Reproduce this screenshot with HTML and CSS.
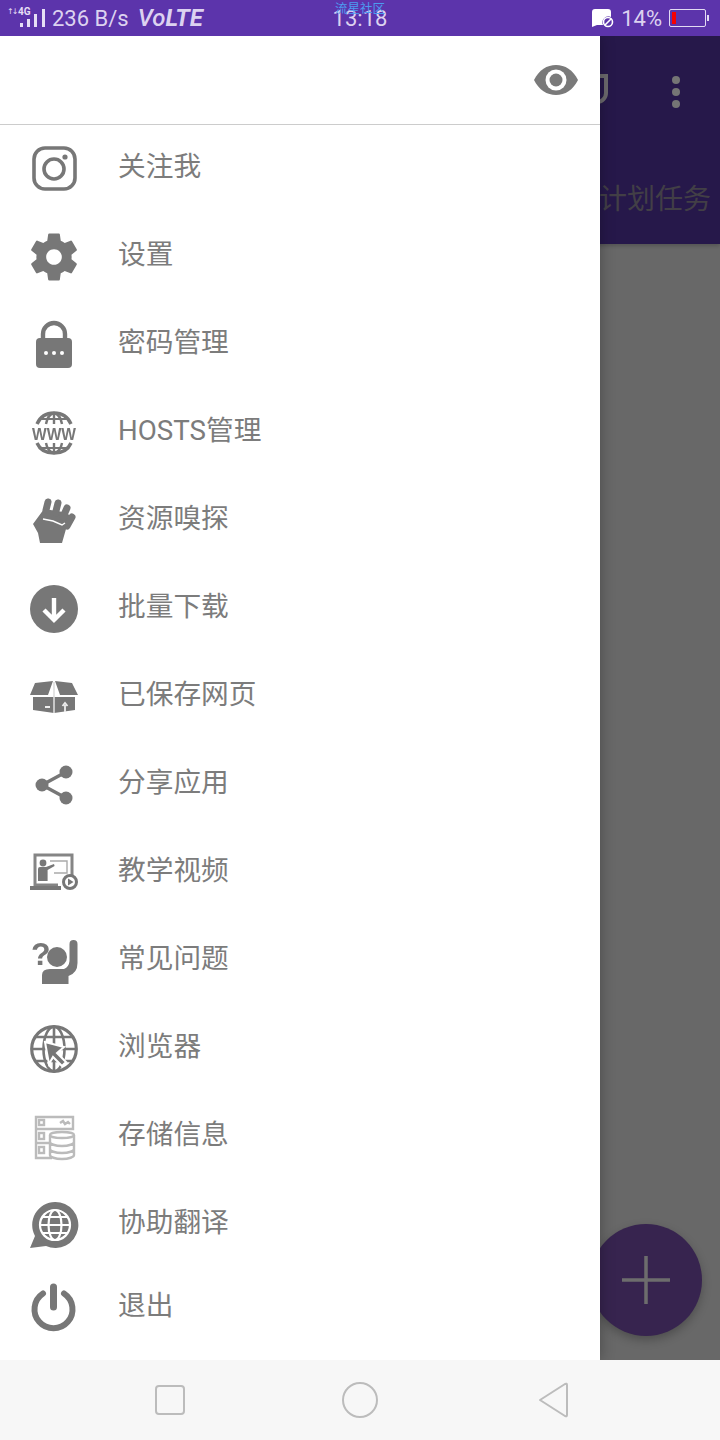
FILE: index.html
```html
<!DOCTYPE html>
<html lang="zh">
  <head>
    <meta charset="UTF-8" />
    <title>Navigation drawer</title>
    <link rel="stylesheet" href="styles.css">
  </head>
  <body>
    <div class="phone">
      <div class="status-bar">
        <div class="status-left">
          <svg class="signal" width="40" height="22" viewBox="0 0 40 22">
            <text class="signal-arrows" x="0" y="9">↑↓</text>
            <text class="signal-tag" x="11" y="10">4G</text>
            <rect x="13" y="18" width="3" height="4" />
            <rect x="20" y="14" width="3" height="8" />
            <rect x="27" y="9" width="3" height="13" />
            <rect x="35" y="4" width="3" height="18" />
          </svg>
          <span class="speed">236 B/s</span>
          <span class="volte">Vo<b>LTE</b></span>
        </div>
        <div class="status-center">
          <span class="watermark">流星社区</span>
          <span class="clock">13:18</span>
        </div>
        <div class="status-right">
          <svg class="msg-icon" width="22" height="20" viewBox="0 0 22 20">
            <path d="M3 1h13a3 3 0 0 1 3 3v5a6 6 0 0 0-8 8H5l-5 2V4a3 3 0 0 1 3-3z" fill="#fff" />
            <circle cx="16" cy="14" r="4.5" fill="none" stroke="#fff" stroke-width="1.6" />
            <path d="M13 17l6-6" stroke="#fff" stroke-width="1.6" />
          </svg>
          <span class="percent">14%</span>
          <div class="battery"><div class="battery-level"></div></div>
          <div class="battery-nub"></div>
        </div>
      </div>

      <div class="main">
        <div class="behind">
          <div class="toolbar">
            <div class="toolbar-icons">
              <svg width="30" height="30" viewBox="0 0 30 30">
                <path d="M0 2h28v17a9 9 0 0 1-9 9H9" fill="none" stroke="#6c6a6e" stroke-width="4" />
                <path d="M0 12h22v8a3 3 0 0 1-3 3H0z" fill="#6c6a6e" />
              </svg>
              <div class="dots"><i></i><i></i><i></i></div>
            </div>
            <div class="toolbar-tab">计划任务</div>
          </div>
        </div>

        <div class="fab">
          <svg width="48" height="48" viewBox="0 0 48 48">
            <path d="M24 0v48M0 24h48" stroke="#6d6d6d" stroke-width="3.5" />
          </svg>
        </div>

        <div class="drawer">
          <div class="drawer-head">
            <svg width="46" height="32" viewBox="0 0 46 32">
              <path d="M1 16C6 6 14 1 23 1s17 5 22 15c-5 10-13 15-22 15S6 26 1 16z" fill="#7a7a7a" />
              <circle cx="23" cy="16" r="10.5" fill="#fff" />
              <circle cx="23" cy="16" r="6.5" fill="#7a7a7a" />
            </svg>
          </div>
          <ul class="menu">
            <li class="menu-item">
              <svg class="menu-icon" viewBox="0 0 48 48">
                <rect x="4" y="3" width="41" height="41" rx="11" fill="none" stroke="#777" stroke-width="3.6" />
                <circle cx="24" cy="24" r="10" fill="none" stroke="#777" stroke-width="3.6" />
                <circle cx="35" cy="12" r="2.6" fill="#777" />
              </svg>
              <span class="menu-label">关注我</span>
            </li>
            <li class="menu-item">
              <svg class="menu-icon" viewBox="2.2 2.2 19.6 19.6">
                <path fill="#777" d="M19.14,12.94c0.04-0.3,0.06-0.61,0.06-0.94c0-0.32-0.02-0.64-0.07-0.94l2.03-1.58c0.18-0.14,0.23-0.41,0.12-0.61l-1.92-3.32c-0.12-0.22-0.37-0.29-0.59-0.22l-2.39,0.96c-0.5-0.38-1.03-0.7-1.62-0.94L14.4,2.81c-0.04-0.24-0.24-0.41-0.48-0.41h-3.84c-0.24,0-0.43,0.17-0.47,0.41L9.25,5.35C8.66,5.59,8.12,5.92,7.63,6.29L5.24,5.33c-0.22-0.08-0.47,0-0.59,0.22L2.74,8.87C2.62,9.08,2.66,9.34,2.86,9.48l2.03,1.58C4.84,11.36,4.8,11.69,4.8,12s0.02,0.64,0.07,0.94l-2.03,1.58c-0.18,0.14-0.23,0.41-0.12,0.61l1.92,3.32c0.12,0.22,0.37,0.29,0.59,0.22l2.39-0.96c0.5,0.38,1.03,0.7,1.62,0.94l0.36,2.54c0.05,0.24,0.24,0.41,0.48,0.41h3.84c0.24,0,0.44-0.17,0.47-0.41l0.36-2.54c0.59-0.24,1.13-0.56,1.62-0.94l2.39,0.96c0.22,0.08,0.47,0,0.59-0.22l1.92-3.32c0.12-0.22,0.07-0.47-0.12-0.61L19.14,12.94z M12,15.2c-1.77,0-3.2-1.43-3.2-3.2s1.43-3.2,3.2-3.2s3.2,1.43,3.2,3.2S13.77,15.2,12,15.2z" />
              </svg>
              <span class="menu-label">设置</span>
            </li>
            <li class="menu-item">
              <svg class="menu-icon" viewBox="0 0 48 48">
                <path d="M13 20v-7a11 11 0 0 1 22 0v7" fill="none" stroke="#777" stroke-width="4.4" />
                <rect x="6" y="17" width="36" height="30" rx="4" fill="#777" />
                <circle cx="16" cy="32" r="2" fill="#fff" />
                <circle cx="24" cy="32" r="2" fill="#fff" />
                <circle cx="32" cy="32" r="2" fill="#fff" />
              </svg>
              <span class="menu-label">密码管理</span>
            </li>
            <li class="menu-item">
              <svg class="menu-icon" viewBox="0 0 48 48">
                <path d="M7 15C10 8 16 4 24 4s14 4 17 11M7 34c3 7 9 10 17 10s14-3 17-10" fill="none" stroke="#777" stroke-width="3.4" />
                <path d="M16 15c1-6 4-10 8-11 4 1 7 5 8 11M24 4v11M16 34c1 6 4 9 8 10 4-1 7-4 8-10M24 34v10" fill="none" stroke="#777" stroke-width="2.4" />
                <path d="M10 10h28M10 39h28" stroke="#777" stroke-width="2" />
                <text class="www" x="24" y="31" text-anchor="middle" textLength="44" lengthAdjust="spacingAndGlyphs">WWW</text>
              </svg>
              <span class="menu-label">HOSTS管理</span>
            </li>
            <li class="menu-item">
              <svg class="menu-icon" viewBox="0 0 48 48">
                <path d="M3 27L14 12l19 3 11 5-8 12-4 14H10L8 36z" fill="#777" />
                <path d="M18 5l-2 8M28 6l-2.500 10M37 11l-4 9M42 20l-5 9" stroke="#777" stroke-width="7" stroke-linecap="round" />
                <path d="M13 22l10 2 9 4 3-2" fill="none" stroke="#fff" stroke-width="1.4" />
              </svg>
              <span class="menu-label">资源嗅探</span>
            </li>
            <li class="menu-item">
              <svg class="menu-icon" viewBox="0 0 48 48">
                <circle cx="24" cy="24" r="24" fill="#777" />
                <path d="M24 13v20M14 25l10 10 10-10" fill="none" stroke="#fff" stroke-width="4.4" />
              </svg>
              <span class="menu-label">批量下载</span>
            </li>
            <li class="menu-item">
              <svg class="menu-icon" viewBox="0 0 48 48">
                <path d="M0 22L5 10l18-2-5 14zM25 8l17 2 6 12H30z" fill="#777" />
                <path d="M3 24h42v13l-21 3-21-3z" fill="#777" />
                <path d="M24 9v31" stroke="#ddd" stroke-width="1.6" />
                <path d="M15 34h5M35 39v-7M32.500 33l2.500-3 2.500 3" fill="none" stroke="#eee" stroke-width="1.8" />
              </svg>
              <span class="menu-label">已保存网页</span>
            </li>
            <li class="menu-item">
              <svg class="menu-icon" viewBox="0 0 48 48">
                <path d="M36 11L12 24l24 13" fill="none" stroke="#777" stroke-width="3.4" />
                <circle cx="36" cy="11" r="6.500" fill="#777" />
                <circle cx="12" cy="24" r="6.500" fill="#777" />
                <circle cx="36" cy="37" r="6.500" fill="#777" />
              </svg>
              <span class="menu-label">分享应用</span>
            </li>
            <li class="menu-item">
              <svg class="menu-icon" viewBox="0 0 48 48">
                <path d="M28 36H5V6h37v20" fill="none" stroke="#858585" stroke-width="3" />
                <circle cx="13" cy="14" r="3.400" fill="#777" />
                <path d="M8 32V20q0-2 2-2h6l8-3 .6 2-7 4v11z" fill="#777" />
                <path d="M20 12h17v12H24" fill="none" stroke="#aaa" stroke-width="1.4" />
                <path d="M0 37h31v4H0z" fill="#777" />
                <circle cx="40" cy="33" r="6.500" fill="#fff" stroke="#777" stroke-width="3" />
                <path d="M38 29.500l5.500 3.500-5.500 3.500z" fill="#777" />
              </svg>
              <span class="menu-label">教学视频</span>
            </li>
            <li class="menu-item">
              <svg class="menu-icon" viewBox="0 0 48 48">
                <text class="qmark" x="1" y="28">?</text>
                <circle cx="27" cy="20" r="10" fill="#777" />
                <path d="M12 47v-9q0-6 8-6h14q5-2 5.500-8V7a4 4 0 0 1 8 0v19q0 10-9 13v8z" fill="#777" />
              </svg>
              <span class="menu-label">常见问题</span>
            </li>
            <li class="menu-item">
              <svg class="menu-icon" viewBox="0 0 48 48">
                <circle cx="24" cy="24" r="22.300" fill="none" stroke="#777" stroke-width="3.200" />
                <ellipse cx="24" cy="24" rx="10.500" ry="22.300" fill="none" stroke="#777" stroke-width="2.600" />
                <path d="M24 2v44M2 24h44M6 12h36M6 36h36" stroke="#777" stroke-width="2.600" />
                <path d="M15 17l19 5-7 6 9 9-4 4-9-9-4 7z" fill="#777" stroke="#fff" stroke-width="2" />
              </svg>
              <span class="menu-label">浏览器</span>
            </li>
            <li class="menu-item">
              <svg class="menu-icon" viewBox="0 0 48 48">
                <g fill="none" stroke="#bbb" stroke-width="2.400">
                  <path d="M22 45H6V4h37v12H6M6 30h14" />
                  <rect x="9" y="7" width="5" height="5" />
                  <rect x="9" y="20" width="5" height="6" />
                  <rect x="9" y="34" width="5" height="6" />
                  <path d="M30 10l3-2 2 3 3-2 2 2" />
                  <ellipse cx="32" cy="22" rx="12" ry="3" />
                  <path d="M20 22v20c0 2 5 4 12 4s12-2 12-4V22M20 29c0 2 5 4 12 4s12-2 12-4M20 36c0 2 5 4 12 4s12-2 12-4" />
                </g>
              </svg>
              <span class="menu-label">存储信息</span>
            </li>
            <li class="menu-item">
              <svg class="menu-icon" viewBox="0 0 48 48">
                <path d="M25 1a23 23 0 1 1-9 44L0 47l5-12A23 23 0 0 1 25 1z" fill="#777" />
                <g fill="none" stroke="#fff" stroke-width="2.200">
                  <circle cx="25" cy="24" r="15" />
                  <ellipse cx="25" cy="24" rx="6.500" ry="15" />
                  <path d="M10 24h30M13 16h24M13 32h24" />
                </g>
              </svg>
              <span class="menu-label">协助翻译</span>
            </li>
            <li class="menu-item menu-item-last">
              <svg class="menu-icon" viewBox="0 0 48 48">
                <path d="M13 9.500a19 19 0 1 0 21 0" fill="none" stroke="#777" stroke-width="6" stroke-linecap="round" />
                <path d="M23.500 3v20" stroke="#777" stroke-width="7" stroke-linecap="round" />
              </svg>
              <span class="menu-label">退出</span>
            </li>
          </ul>
        </div>
      </div>

      <div class="nav-bar">
        <svg width="30" height="30" viewBox="0 0 30 30">
          <rect x="1" y="1" width="28" height="28" rx="3" fill="none" stroke="#bcbcbc" stroke-width="2" />
        </svg>
        <svg width="36" height="36" viewBox="0 0 36 36">
          <circle cx="18" cy="18" r="17" fill="none" stroke="#bcbcbc" stroke-width="2" />
        </svg>
        <svg class="nav-back" width="32" height="36" viewBox="0 0 32 36">
          <path d="M2 18L27 2q2-1 2 1v30q0 2-2 1z" fill="none" stroke="#bcbcbc" stroke-width="2" stroke-linejoin="round" />
        </svg>
      </div>
    </div>
  </body>
</html>
```

FILE: styles.css
```css
* {
  box-sizing: border-box;
}

body {
  margin: 0;
  font-family: Roboto, "Noto Sans CJK SC", sans-serif;
  background: #f7f7f7;
}

.phone {
  width: 720px;
  height: 1440px;
  display: flex;
  flex-direction: column;
  overflow: hidden;
}

/* status bar */
.status-bar {
  height: 36px;
  flex: none;
  background: #5c34ab;
  color: #dcd2f0;
  display: grid;
  grid-template-columns: 1fr auto 1fr;
  align-items: center;
  font-size: 22px;
}

.status-left {
  display: flex;
  align-items: center;
  padding-left: 7px;
}

.signal {
  fill: #e6dff5;
  margin-right: 5px;
  margin-bottom: 4px;
}

.signal-arrows {
  font-size: 8px;
  font-family: "DejaVu Sans", sans-serif;
  letter-spacing: -2px;
}

.signal-tag {
  font-size: 10px;
  font-weight: 700;
  font-family: Roboto, sans-serif;
}

.volte {
  margin-left: 9px;
  font-size: 24px;
  font-style: italic;
  font-weight: 500;
}

.volte b {
  font-weight: 700;
}

.status-center {
  position: relative;
  text-align: center;
}

.watermark {
  position: absolute;
  top: -4px;
  left: 0;
  right: 0;
  font-size: 12.5px;
  line-height: 14px;
  color: #4d9bf0;
  white-space: nowrap;
}

.status-right {
  display: flex;
  align-items: center;
  justify-content: flex-end;
  padding-right: 11px;
}

.msg-icon {
  margin-right: 7px;
}

.percent {
  margin-right: 7px;
}

.battery {
  width: 37px;
  height: 18px;
  border: 1px solid #e2daf3;
  border-radius: 2px;
  padding: 2px;
}

.battery-level {
  width: 4px;
  height: 100%;
  background: #f80000;
}

.battery-nub {
  width: 2px;
  height: 6px;
  margin-left: 1px;
  background: #e2daf3;
}

/* app behind the drawer */
.main {
  position: relative;
  height: 1324px;
  flex: none;
  overflow: hidden;
}

.behind {
  height: 100%;
  background: #686868;
}

.toolbar {
  height: 208px;
  background: #26184a;
  box-shadow: 0 2px 4px rgba(0, 0, 0, 0.2);
  display: flex;
  flex-direction: column;
}

.toolbar-icons {
  display: flex;
  justify-content: flex-end;
  align-items: flex-start;
  gap: 64px;
  padding: 38px 40px 0 0;
  height: 130px;
}

.dots {
  display: flex;
  flex-direction: column;
  gap: 4px;
  padding-top: 2px;
}

.dots i {
  width: 8px;
  height: 8px;
  border-radius: 50%;
  background: #757575;
}

.toolbar-tab {
  text-align: right;
  padding-right: 9px;
  font-size: 28px;
  line-height: 68px;
  color: #423f46;
}

.fab {
  position: absolute;
  right: 18px;
  bottom: 24px;
  width: 112px;
  height: 112px;
  border-radius: 50%;
  background: #37244f;
  box-shadow: 0 4px 10px rgba(0, 0, 0, 0.25);
  display: flex;
  align-items: center;
  justify-content: center;
}

/* drawer */
.drawer {
  position: absolute;
  top: 0;
  bottom: 0;
  left: 0;
  width: 600px;
  background: #fff;
  box-shadow: 0 0 14px rgba(0, 0, 0, 0.3);
}

.drawer-head {
  height: 89px;
  border-bottom: 1px solid #ccc;
  display: flex;
  justify-content: flex-end;
  align-items: center;
  padding-right: 21px;
  padding-bottom: 1px;
}

.drawer-head svg {
  filter: blur(0.6px);
}

.menu {
  list-style: none;
  margin: 0;
  padding: 0;
}

.menu-item {
  height: 88px;
  display: flex;
  align-items: center;
  gap: 40px;
  padding-left: 30px;
}

.menu-item-last {
  height: 78px;
}

.menu-icon {
  width: 48px;
  height: 48px;
  flex: none;
  overflow: visible;
  filter: blur(0.6px);
}

.menu-label {
  font-size: 27.7px;
  color: #7c7c7c;
  padding-bottom: 10px;
}

.www {
  font-family: "Liberation Sans", sans-serif;
  font-size: 17px;
  font-weight: 700;
  fill: #777;
}

.qmark {
  font-family: "Liberation Sans", sans-serif;
  font-size: 32px;
  font-weight: 700;
  fill: #777;
}

/* navigation bar */
.nav-bar {
  flex: 1;
  background: #f7f7f7;
  display: grid;
  grid-template-columns: 340px 40px 340px;
  align-items: center;
  justify-items: center;
}

.nav-back {
  margin-left: 8px;
}
```
